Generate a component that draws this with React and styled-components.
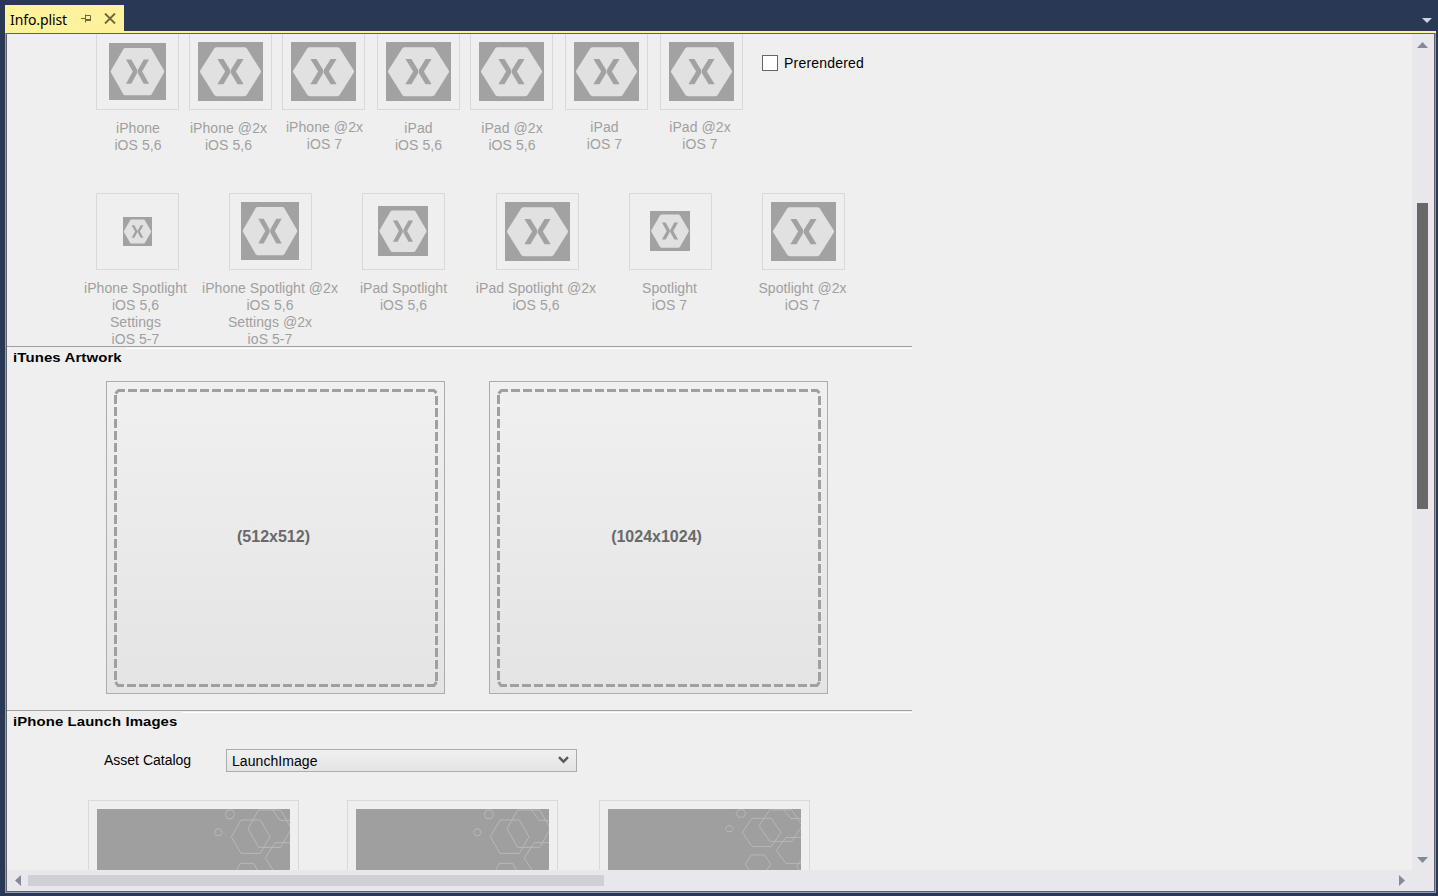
import React from "react";
import styled, { createGlobalStyle } from "styled-components";

const GlobalStyle = createGlobalStyle`
  html, body { margin: 0; padding: 0; }
  body { overflow: hidden; }
  * { box-sizing: border-box; }
  svg { display: block; flex: none; }
`;

const Shell = styled.div`
  width: 1438px;
  height: 896px;
  background: #293955;
  display: flex;
  flex-direction: column;
  padding: 5px 2px 3px 5px;
  font-family: "Liberation Sans", Arial, sans-serif;
  font-size: 14px;
  line-height: 17px;
  letter-spacing: 0.06px;
  color: #000;
`;

const TabStrip = styled.div`
  height: 28px;
  display: flex;
  justify-content: space-between;
  border-bottom: 2px solid #fff29d;
`;

const Tab = styled.div`
  width: 119px;
  height: 26px;
  background: #fff29d;
  display: flex;
  align-items: center;
  padding: 2px 0 0 5px;
  font-family: "Noto Sans", sans-serif;
  font-size: 14px;
  letter-spacing: -0.1px;
`;

const TabTitle = styled.span`
  width: 71px;
  white-space: nowrap;
`;

const PinIcon = styled.svg`
  margin-bottom: 1px;
`;

const CloseIcon = styled.svg`
  margin: 0 0 1px 12px;
`;

const OverflowArrow = styled.svg`
  margin: 13px 4px 0 0;
`;

const Frame = styled.div`
  flex: 1;
  display: flex;
  border: solid #8e9bbc;
  border-width: 0 1px 1px 1px;
`;

const Inner = styled.div`
  flex: 1;
  display: grid;
  grid-template-columns: 1405px 21px;
  grid-template-rows: 836px 21px;
  border: 1px solid #5f5f68;
  background: #e7e7ec;
`;

const Content = styled.div`
  background: #efefef;
  overflow: hidden;
  height: 836px;
`;

const IconsSection = styled.section`
  height: 312px;
  display: flex;
  flex-direction: column;
`;

const TileRow = styled.div`
  display: flex;
  align-items: flex-start;
  padding-left: 89px;
  margin-top: ${(p) => p.$top}px;
  height: 77px;
`;

const Tile = styled.div`
  width: 83px;
  flex: none;
  display: flex;
  flex-direction: column;
  align-items: center;
  margin-right: ${(p) => p.$gap}px;
`;

const TileFrame = styled.div`
  width: 83px;
  height: 77px;
  border: 1px solid #d9d9d9;
  display: flex;
  align-items: center;
  justify-content: center;
`;

const TileArt = styled.svg`
  margin: 0 ${(p) => p.$pad}px ${(p) => p.$pad}px 0;
`;

const TileLabel = styled.div`
  margin-top: ${(p) => p.$top}px;
  margin-left: ${(p) => p.$shift * 2}px;
  color: #a0a0a0;
  text-align: center;
  white-space: pre;
`;

const CheckLabel = styled.label`
  display: flex;
  align-items: center;
  gap: 6px;
  margin: 22px 0 0 19px;
  letter-spacing: 0.2px;
`;

const CheckBox = styled.span`
  width: 16px;
  height: 16px;
  margin-bottom: 1px;
  background: #fff;
  border: 1px solid #666;
`;

const Section = styled.section`
  height: 364px;
`;

const SectionHead = styled.header`
  width: 905px;
  height: 20px;
  border-top: 1px solid #a0a0a0;
  padding: 1px 0 0 0;
`;

const SectionRule = styled.div`
  border-top: 1px solid #fff;
  padding-left: 3px;
`;

const SectionTitle = styled.h2`
  margin: -1px 0 0;
  width: ${(p) => p.$w}px;
  padding-left: 3px;
  background: #efefef;
  font-size: 13px;
  font-weight: bold;
  letter-spacing: 0.1px;
  line-height: 19px;
  white-space: nowrap;

  span {
    display: inline-block;
    transform: scaleX(${(p) => p.$stretch});
    transform-origin: left;
  }
`;

const ArtworkRow = styled.div`
  display: flex;
  gap: 44px;
  padding: 15px 0 0 99px;
`;

const ArtworkCard = styled.div`
  width: 339px;
  height: 313px;
  display: grid;
  background: linear-gradient(#f0f0f0, #e4e4e4);
  border: 1px solid #acacac;

  > * { grid-area: 1 / 1; }
`;

const ArtworkSize = styled.span`
  place-self: center;
  margin: 0 4px 2px 0;
  font-size: 16px;
  font-weight: bold;
  letter-spacing: 0;
  color: #696969;
`;

const Field = styled.div`
  display: flex;
  align-items: center;
  padding: 19px 0 0 97px;
`;

const FieldLabel = styled.span`
  width: 122px;
  letter-spacing: 0;
`;

const Select = styled.div`
  width: 351px;
  height: 23px;
  display: flex;
  align-items: center;
  justify-content: space-between;
  padding: 1px 7px 0 5px;
  border: 1px solid #acacac;
  background: linear-gradient(#f0f0f0, #e4e4e4);
`;

const Chevron = styled.svg`
  margin-bottom: 3px;
`;

const LaunchRow = styled.div`
  display: flex;
  padding: 28px 0 0 81px;
`;

const LaunchCard = styled.div`
  width: 211px;
  height: 300px;
  flex: none;
  margin-right: ${(p) => p.$gap}px;
  padding: 8px;
  border: 1px solid #d9d9d9;
`;

const VScroll = styled.div`
  display: flex;
  flex-direction: column;
  align-items: center;
  padding: 8px 0 7px;
`;

const VThumb = styled.div`
  width: 11px;
  height: 306px;
  margin: 155px 0 auto;
  background: #686868;
`;

const HScroll = styled.div`
  display: flex;
  align-items: center;
  padding: 0 7px 0 8px;
`;

const HThumb = styled.div`
  width: 576px;
  height: 11px;
  margin: 0 auto 0 7px;
  background: #cfd0d6;
`;

function HexLogo({ w, h }) {
  return (
    <TileArt $pad={w % 2 === 0 ? 1 : 0} width={w} height={h} viewBox="0 0 57 57" preserveAspectRatio="none">
      <rect width="57" height="57" fill="#a2a2a2" />
      <path
        d="M16.800 5h23.400c1.200 0 2 .4 2.600 1.400L54.900 27.200c.5.900.5 1.700 0 2.600L42.800 50.900c-.6 1-1.400 1.400-2.600 1.400H16.800c-1.200 0-2-.4-2.600-1.400L2.100 29.800c-.5-.9-.5-1.700 0-2.600L14.200 6.400C14.800 5.400 15.600 5 16.800 5z"
        fill="#e1e1e1"
      />
      <path
        d="M17 16.400H22.300L28.500 27.600L34.700 16.400H40L33.200 28.500L40 40.700H34.700L28.500 29.500L22.300 40.700H17L23.800 28.500z"
        fill="#a2a2a2"
      />
      <path d="M28.500 26V31" stroke="#e1e1e1" strokeWidth=".5" />
    </TileArt>
  );
}

const hex = (cx, cy, r, rt, ry) =>
  `M${cx - r} ${cy}L${cx - rt} ${cy - ry}H${cx + rt}L${cx + r} ${cy}L${cx + rt} ${cy + ry}H${cx - rt}Z`;

function LaunchArt({ squash = 1 }) {
  return (
    <svg width="193" height={240 * squash} viewBox="0 0 579 720" preserveAspectRatio="none">
      <rect width="579" height="720" fill="#9f9f9f" />
      <g fill="none" stroke="#b8b8b8" strokeWidth="3" strokeLinejoin="round">
        <path d={hex(399, 16, 14, 8, 13)} />
        <path d={hex(364, 70, 12, 6, 10)} />
        <path d={hex(461, 83, 58, 29, 50)} />
        <path d={hex(518, 59, 65, 33, 56)} />
        <path d="M525 0L549 34H600" />
        <path d={hex(562, 147, 57, 28, 46)} />
        <path d={hex(450, 196, 38, 20, 33)} />
        <path d={hex(606, 204, 40, 20, 34)} />
      </g>
    </svg>
  );
}

function DashedOutline() {
  return (
    <svg width="337" height="311" viewBox="1 1 337 311">
      <g fill="none" stroke="#a0a0a0" strokeWidth="3">
        <path d="M22 9.500H326" strokeDasharray="9 3" />
        <path d="M330.500 15V301" strokeDasharray="9 3" />
        <path d="M21 304.500H325" strokeDasharray="9 3" />
        <path d="M9.500 14V300" strokeDasharray="9 3" />
        <path d="M9.500 12.500L12.500 9.500H19M325 9.500H328L330.500 12M330.500 301L328 304.500H325M9.500 301L12 304.500H18" />
      </g>
    </svg>
  );
}

function Arrow({ dir }) {
  const d = {
    up: "M0 6L5.500 0L11 6z",
    down: "M0 0H11L5.500 6z",
    left: "M6 0V11L0 5.500z",
    right: "M0 0V11L6 5.500z",
  }[dir];
  const vertical = dir === "up" || dir === "down";
  return (
    <svg width={vertical ? 11 : 6} height={vertical ? 6 : 11}>
      <path d={d} fill="#868999" />
    </svg>
  );
}

const appIcons = [
  { w: 57, h: 57, gap: 10, top: 10, text: "iPhone\niOS 5,6", shift: 0.5 },
  { w: 65, h: 59, gap: 10, top: 10, text: "iPhone @2x\niOS 5,6", shift: -2 },
  { w: 65, h: 59, gap: 12, top: 9, text: "iPhone @2x\niOS 7", shift: 1 },
  { w: 65, h: 59, gap: 10, top: 10, text: "iPad\niOS 5,6", shift: 0 },
  { w: 65, h: 59, gap: 12, top: 10, text: "iPad @2x\niOS 5,6", shift: 0.5 },
  { w: 65, h: 59, gap: 12, top: 9, text: "iPad\niOS 7", shift: -2 },
  { w: 65, h: 59, gap: 0, top: 9, text: "iPad @2x\niOS 7", shift: -1.5 },
];

const spotlightIcons = [
  { w: 29, h: 29, gap: 50, top: 10, text: "iPhone Spotlight\niOS 5,6\nSettings\niOS 5-7", shift: -2 },
  { w: 58, h: 58, gap: 50, top: 10, text: "iPhone Spotlight @2x\niOS 5,6\nSettings @2x\nioS 5-7", shift: -0.5 },
  { w: 50, h: 50, gap: 51, top: 10, text: "iPad Spotlight\niOS 5,6", shift: 0 },
  { w: 65, h: 59, gap: 50, top: 10, text: "iPad Spotlight @2x\niOS 5,6", shift: -1.5 },
  { w: 40, h: 40, gap: 50, top: 10, text: "Spotlight\niOS 7", shift: -1 },
  { w: 65, h: 59, gap: 0, top: 10, text: "Spotlight @2x\niOS 7", shift: -1 },
];

function IconTile({ w, h, gap, top, text, shift }) {
  return (
    <Tile $gap={gap}>
      <TileFrame>
        <HexLogo w={w} h={h} />
      </TileFrame>
      <TileLabel $top={top} $shift={shift}>{text}</TileLabel>
    </Tile>
  );
}

function Heading({ children, w, stretch }) {
  return (
    <SectionHead>
      <SectionRule>
        <SectionTitle $w={w} $stretch={stretch}><span>{children}</span></SectionTitle>
      </SectionRule>
    </SectionHead>
  );
}

export default function App() {
  return (
    <Shell>
      <GlobalStyle />
      <TabStrip>
        <Tab>
          <TabTitle>Info.plist</TabTitle>
          <PinIcon width="11" height="9" viewBox="0 0 11 9">
            <path d="M0 4.500H4M4.500 0.500V8.500M4 1.500H9.500V6" fill="none" stroke="#75633d" />
            <path d="M4 6H10" stroke="#75633d" strokeWidth="2" />
          </PinIcon>
          <CloseIcon width="12" height="11" viewBox="0 0 12 11">
            <path d="M1 .5L11 10.500M11 .5L1 10.500" stroke="#75633d" strokeWidth="1.900" />
          </CloseIcon>
        </Tab>
        <OverflowArrow width="10" height="5">
          <path d="M0 0H10L5 5z" fill="#ced4dd" />
        </OverflowArrow>
      </TabStrip>
      <Frame>
        <Inner>
          <Content>
            <IconsSection>
              <TileRow $top={-1}>
                {appIcons.map((icon, i) => <IconTile key={i} {...icon} />)}
                <CheckLabel><CheckBox />Prerendered</CheckLabel>
              </TileRow>
              <TileRow $top={83}>
                {spotlightIcons.map((icon, i) => <IconTile key={i} {...icon} />)}
              </TileRow>
            </IconsSection>
            <Section>
              <Heading w={116} stretch={1.15}>iTunes Artwork</Heading>
              <ArtworkRow>
                <ArtworkCard><DashedOutline /><ArtworkSize>(512x512)</ArtworkSize></ArtworkCard>
                <ArtworkCard><DashedOutline /><ArtworkSize>(1024x1024)</ArtworkSize></ArtworkCard>
              </ArtworkRow>
            </Section>
            <Section>
              <Heading w={172} stretch={1.145}>iPhone Launch Images</Heading>
              <Field>
                <FieldLabel>Asset Catalog</FieldLabel>
                <Select>
                  LaunchImage
                  <Chevron width="11" height="8" viewBox="0 0 11 8">
                    <path d="M1 1.200L5.500 5.700L10 1.200" fill="none" stroke="#5a5a5a" strokeWidth="2.400" />
                  </Chevron>
                </Select>
              </Field>
              <LaunchRow>
                <LaunchCard $gap={48}><LaunchArt /></LaunchCard>
                <LaunchCard $gap={41}><LaunchArt /></LaunchCard>
                <LaunchCard $gap={0}><LaunchArt squash={0.845} /></LaunchCard>
              </LaunchRow>
            </Section>
          </Content>
          <VScroll>
            <Arrow dir="up" />
            <VThumb />
            <Arrow dir="down" />
          </VScroll>
          <HScroll>
            <Arrow dir="left" />
            <HThumb />
            <Arrow dir="right" />
          </HScroll>
        </Inner>
      </Frame>
    </Shell>
  );
}
